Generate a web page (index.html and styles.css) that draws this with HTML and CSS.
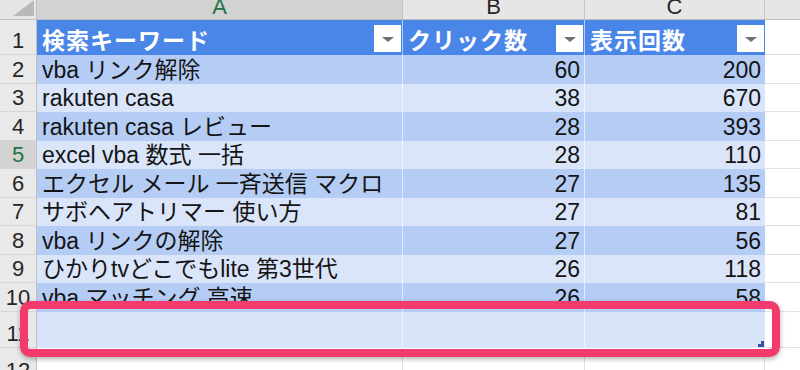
FILE: index.html
```html
<!DOCTYPE html>
<html lang="ja">
<head>
<meta charset="utf-8">
<title>Sheet</title>
<link rel="stylesheet" href="styles.css">
</head>
<body>
<div class="sheet">
  <div class="corner"><svg class="corner-tri" width="36" height="19" viewBox="0 0 36 19"><polygon points="34,0 34,16 13,16" fill="#b9b9b9"/></svg></div>
  <div class="ch sel"><span>A</span></div>
  <div class="ch"><span>B</span></div>
  <div class="ch"><span>C</span></div>
  <div class="ch end"></div>

  <div class="rh">1</div>
  <div class="cell hd sep"><span>検索キーワード</span><span class="fb"></span></div>
  <div class="cell hd sep"><span>クリック数</span><span class="fb"></span></div>
  <div class="cell hd"><span>表示回数</span><span class="fb"></span></div>
  <div class="out"></div>

  <div class="rh">2</div>
  <div class="cell b1 sep">vba リンク解除</div>
  <div class="cell b1 sep num">60</div>
  <div class="cell b1 num">200</div>
  <div class="out"></div>

  <div class="rh">3</div>
  <div class="cell b2 sep">rakuten casa</div>
  <div class="cell b2 sep num">38</div>
  <div class="cell b2 num">670</div>
  <div class="out"></div>

  <div class="rh">4</div>
  <div class="cell b1 sep">rakuten casa レビュー</div>
  <div class="cell b1 sep num">28</div>
  <div class="cell b1 num">393</div>
  <div class="out"></div>

  <div class="rh active">5</div>
  <div class="cell b2 sep">excel vba 数式 一括</div>
  <div class="cell b2 sep num">28</div>
  <div class="cell b2 num">110</div>
  <div class="out"></div>

  <div class="rh">6</div>
  <div class="cell b1 sep">エクセル メール 一斉送信 マクロ</div>
  <div class="cell b1 sep num">27</div>
  <div class="cell b1 num">135</div>
  <div class="out"></div>

  <div class="rh">7</div>
  <div class="cell b2 sep">サボヘアトリマー 使い方</div>
  <div class="cell b2 sep num">27</div>
  <div class="cell b2 num">81</div>
  <div class="out"></div>

  <div class="rh">8</div>
  <div class="cell b1 sep">vba リンクの解除</div>
  <div class="cell b1 sep num">27</div>
  <div class="cell b1 num">56</div>
  <div class="out"></div>

  <div class="rh">9</div>
  <div class="cell b2 sep">ひかりtvどこでもlite 第3世代</div>
  <div class="cell b2 sep num">26</div>
  <div class="cell b2 num">118</div>
  <div class="out"></div>

  <div class="rh">10</div>
  <div class="cell b1 sep">vba マッチング 高速</div>
  <div class="cell b1 sep num">26</div>
  <div class="cell b1 num">58</div>
  <div class="out"></div>

  <div class="rh">11</div>
  <div class="cell b3 sep"></div>
  <div class="cell b3 sep"></div>
  <div class="cell b3 last"><svg class="handle" width="6" height="6" viewBox="0 0 6 6"><polygon points="3,0 6,0 6,6 0,6 0,3 3,3" fill="#3d4f9e"/></svg></div>
  <div class="out"></div>

  <div class="rh">12</div>
  <div class="cell blank"></div>
  <div class="cell blank"></div>
  <div class="cell blank"></div>
  <div class="out"></div>
</div>
<div class="mark"></div>
</body>
</html>
```
FILE: styles.css
```css
html, body {
  margin: 0;
  padding: 0;
}
body {
  width: 800px;
  height: 370px;
  overflow: hidden;
  position: relative;
  background: #ffffff;
  font-family: "Liberation Sans", "Noto Sans CJK JP", sans-serif;
}
.sheet {
  display: grid;
  grid-template-columns: 37px 366px 182px 180px 1fr;
  grid-template-rows: 20px 35px repeat(9, 28.5px) 36px 37px;
}
.corner {
  background: #e6e6e6;
  border-right: 1px solid #bfbfbf;
  border-bottom: 1px solid #bfbfbf;
  box-sizing: border-box;
  overflow: hidden;
}
.corner-tri {
  display: block;
}
.ch {
  background: #e6e6e6;
  border-right: 1px solid #c4c4c4;
  border-bottom: 1px solid #bdbdbd;
  box-sizing: border-box;
  overflow: hidden;
  text-align: center;
  font-size: 22px;
  line-height: 22px;
  color: #262626;
}
.ch span {
  display: block;
  margin-top: -4px;
}
.ch.sel {
  background: #d3d3d3;
  color: #217346;
}
.ch.end {
  border-right: none;
}
.rh {
  background: #e9e9e9;
  border-right: 1px solid #bfbfbf;
  border-bottom: 1px solid #d6d6d6;
  box-sizing: border-box;
  display: flex;
  align-items: flex-end;
  justify-content: center;
  font-size: 22px;
  line-height: 26px;
  color: #262626;
  overflow: hidden;
}
.rh.active {
  background: #d3d3d3;
  color: #217346;
}
.cell {
  display: flex;
  align-items: flex-end;
  font-size: 23px;
  line-height: 26px;
  padding: 0 4px 1px 5px;
  box-sizing: border-box;
  color: #141414;
  white-space: nowrap;
  overflow: hidden;
}
.sep {
  border-right: 1px solid rgba(255, 255, 255, 0.6);
}
.num {
  justify-content: flex-end;
}
.hd {
  background: #4a86e8;
  color: #ffffff;
  font-weight: bold;
  letter-spacing: 1px;
  justify-content: space-between;
  padding-right: 1px;
}
.fb {
  flex: none;
  width: 27px;
  height: 27px;
  margin-bottom: 2px;
  background: #ffffff;
  display: flex;
  align-items: center;
  justify-content: center;
}
.fb::after {
  content: "";
  width: 0;
  height: 0;
  border-left: 6px solid transparent;
  border-right: 6px solid transparent;
  border-top: 5px solid #717171;
  margin-top: 2px;
}
.b1 {
  background: #b5cdf5;
}
.b2 {
  background: #dae5fa;
}
.b3 {
  background: #d7e4fa;
}
.last {
  position: relative;
}
.handle {
  position: absolute;
  right: 1px;
  bottom: 1px;
}
.blank {
  background: #ffffff;
  border-right: 1px solid #e1e1e1;
}
.out {
  background: #ffffff;
  border-bottom: 1px solid #e1e1e1;
  box-sizing: border-box;
}
.mark {
  position: absolute;
  left: 20px;
  top: 301px;
  width: 760px;
  height: 56px;
  box-sizing: border-box;
  border: 8px solid #f23b6c;
  border-radius: 10px;
  box-shadow: 0 2px 5px rgba(0, 0, 0, 0.3);
}
```
